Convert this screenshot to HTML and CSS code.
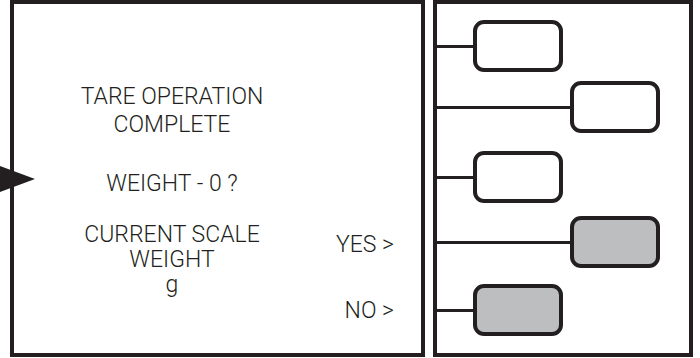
FILE: index.html
```html
<!DOCTYPE html>
<html>
<head>
<meta charset="utf-8">
<link rel="stylesheet" href="styles.css">
</head>
<body>
<div class="page">
  <section class="screen">
    <div class="message">
      <p class="title">TARE OPERATION<br>COMPLETE</p>
      <p class="question">WEIGHT - 0 ?</p>
      <p class="current">CURRENT SCALE<br>WEIGHT<br>g</p>
    </div>
    <div class="choices">
      <span class="choice yes">YES &gt;</span>
      <span class="choice no">NO &gt;</span>
    </div>
  </section>
  <svg class="pointer" width="36" height="30" viewBox="0 0 36 30"><polygon points="0,0 35,13 0,26" fill="#231f20"/></svg>
  <section class="keys">
    <div class="row r1"><span class="wire w-short"></span><span class="key"></span></div>
    <div class="row r2"><span class="wire w-long"></span><span class="key"></span></div>
    <div class="row r3"><span class="wire w-short"></span><span class="key"></span></div>
    <div class="row r4"><span class="wire w-long"></span><span class="key grey"></span></div>
    <div class="row r5"><span class="wire w-short"></span><span class="key grey"></span></div>
  </section>
</div>
</body>
</html>
```
FILE: styles.css
```css
html, body {
  margin: 0;
  padding: 0;
  background: #ffffff;
}
.page {
  position: relative;
  width: 700px;
  height: 358px;
  display: flex;
  padding-left: 10px;
  box-sizing: border-box;
  gap: 8px;
}
.screen {
  width: 415px;
  height: 357px;
  box-sizing: border-box;
  border: 4px solid #231f20;
  display: flex;
  font-family: Roboto, "Liberation Sans", sans-serif;
  font-weight: 300;
  color: #231f20;
  font-size: 23px;
}
.message {
  width: 316px;
  text-align: center;
  padding-top: 79px;
}
.message p {
  margin: 0;
}
.title {
  line-height: 28px;
}
.question {
  margin-top: 31px !important;
  line-height: 28px;
}
.current {
  margin-top: 24px !important;
  line-height: 25px;
}
.choices {
  flex: 1;
  display: flex;
  flex-direction: column;
  align-items: flex-end;
  padding-right: 27px;
  padding-top: 228px;
  line-height: 26px;
}
.no {
  margin-top: 40px;
}
.pointer {
  position: absolute;
  left: 0;
  top: 166px;
}
.keys {
  width: 260px;
  height: 357px;
  box-sizing: border-box;
  border: 4px solid #231f20;
  display: flex;
  flex-direction: column;
  padding-top: 16px;
}
.row {
  display: flex;
  align-items: center;
  height: 52px;
}
.r2 { margin-top: 9px; }
.r3 { margin-top: 18px; }
.r4 { margin-top: 13px; }
.r5 { margin-top: 16px; }
.wire {
  height: 3px;
  background: #231f20;
}
.w-short { width: 36px; }
.w-long { width: 133px; }
.key {
  width: 90px;
  height: 52px;
  box-sizing: border-box;
  border: 4px solid #231f20;
  border-radius: 11px;
  background: #ffffff;
}
.key.grey {
  background: #bcbec0;
}
```
